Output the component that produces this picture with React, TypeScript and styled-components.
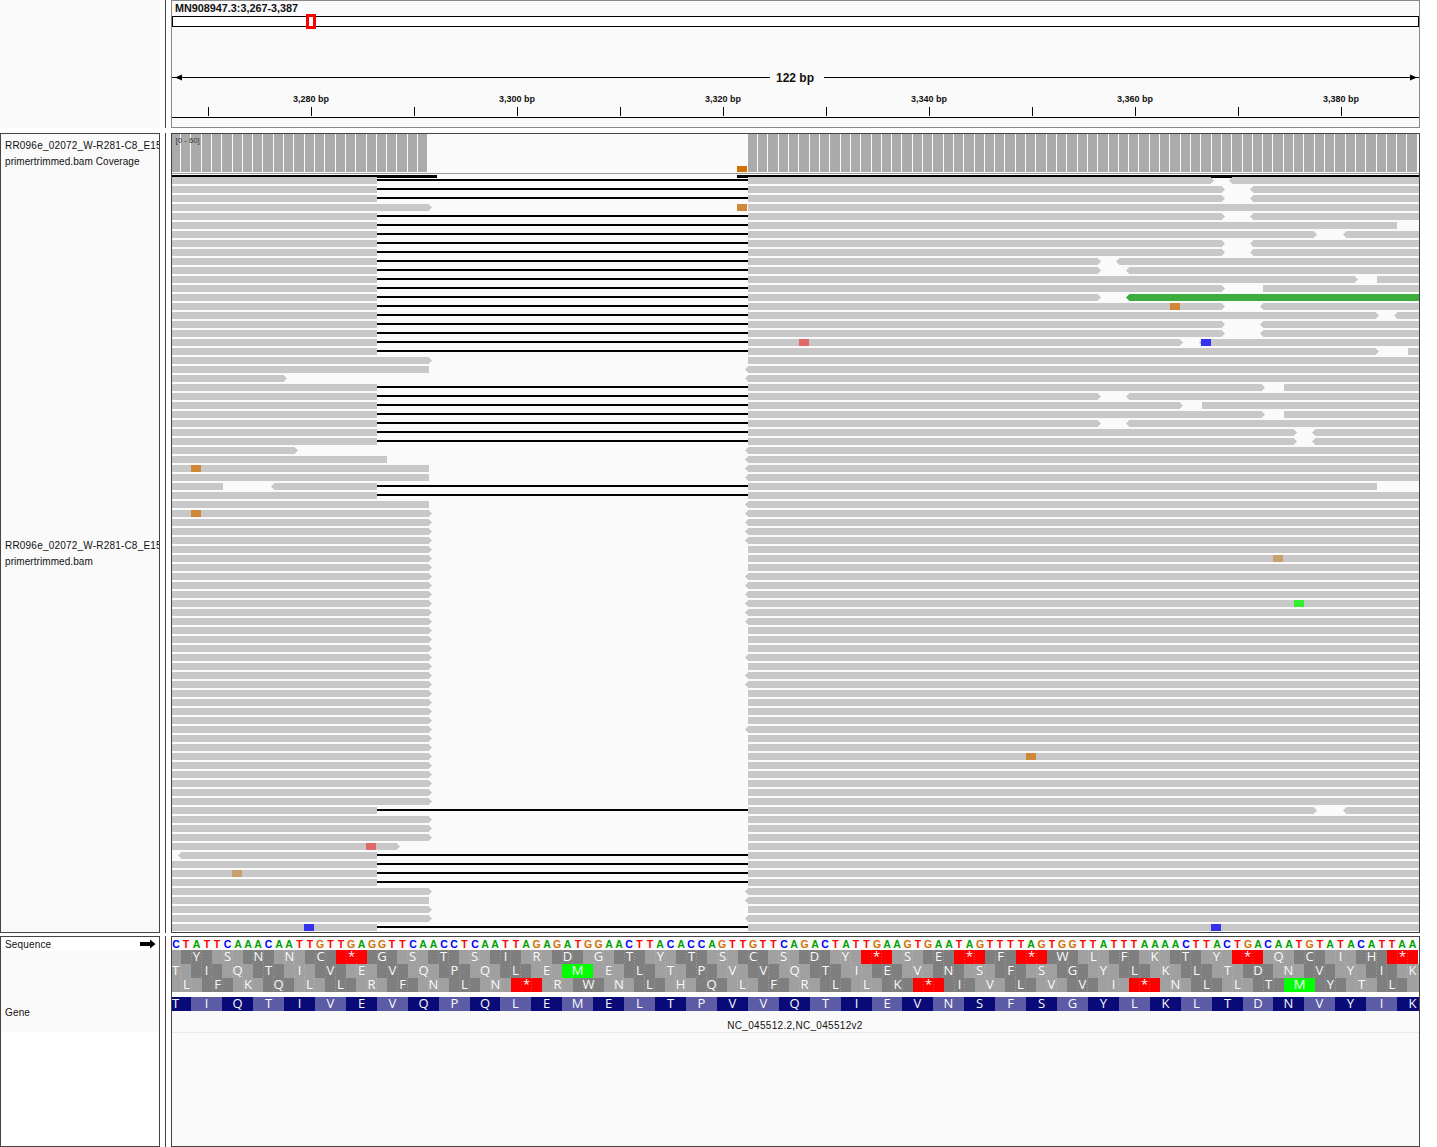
import styled, { createGlobalStyle } from "styled-components";

const GlobalStyle = createGlobalStyle`
  html, body {
    margin: 0;
    padding: 0;
    background: #fff;
  }
`;

const Page = styled.div`
  width: 1437px;
  height: 1147px;
  overflow: hidden;
  display: flex;
  flex-direction: column;
  font-family: "Liberation Sans", Arial, sans-serif;
  color: #111;
`;

const Band = styled.div<{ $h: number; $gap?: number }>`
  display: flex;
  height: ${(p) => p.$h}px;
  margin-bottom: ${(p) => p.$gap ?? 0}px;
  flex: none;
`;

const NamePanel = styled.div<{ $framed?: boolean }>`
  box-sizing: border-box;
  width: 160px;
  background: #fafafa;
  display: flex;
  flex-direction: column;
  ${(p) => p.$framed && `border: 1px solid #444;`}
`;

const Splitter = styled.div`
  width: 1px;
  margin: 0 5px;
  background: #444;
  flex: none;
`;

const DataPanel = styled.div<{ $soft?: boolean }>`
  box-sizing: border-box;
  width: 1249px;
  background: #fafafa;
  border: 1px solid ${(p) => (p.$soft ? "#888" : "#444")};
  overflow: hidden;
  display: flex;
  flex-direction: column;
  flex: none;
`;

const LocusTitle = styled.div`
  font-size: 10.8px;
  font-weight: bold;
  line-height: 15px;
  padding-left: 3px;
`;

const Ideogram = styled.div`
  box-sizing: border-box;
  position: relative;
  height: 11px;
  flex: none;
  background: #fff;
  border: 1px solid #000;
`;

const Viewport = styled.div`
  position: absolute;
  left: 133px;
  top: -3px;
  width: 10px;
  height: 15px;
  box-sizing: border-box;
  border: 3px solid #f00;
  background: #fff;
`;

const Chart = styled.svg`
  display: block;
  flex: none;
`;

const CoverageName = styled.div`
  height: 40px;
  padding: 4px 0 0 4px;
  flex: none;
`;

const AlignmentName = styled.div`
  flex: 1;
  display: flex;
  flex-direction: column;
  justify-content: center;
  padding: 0 0 2px 4px;
`;

const NameLine = styled.div<{ $wide?: boolean }>`
  font-size: 10px;
  line-height: 16px;
  letter-spacing: ${(p) => (p.$wide ? "0.2px" : "0.07px")};
  white-space: nowrap;
  overflow: hidden;
`;

const SequenceName = styled.div`
  display: flex;
  justify-content: space-between;
  align-items: center;
  height: 14px;
  padding: 0 3px 0 4px;
  font-size: 10px;
  letter-spacing: 0.15px;
`;

const GeneName = styled.div`
  height: 81px;
  padding: 48px 0 0 4px;
  box-sizing: border-box;
  font-size: 10px;
  letter-spacing: 0.15px;
  line-height: 27px;
  background: #fafafa;
`;

const FootPanel = styled(NamePanel)`
  background: #fff;
`;

const BaseRow = styled.div`
  display: flex;
  height: 13px;
  flex: none;
`;

const BaseLetter = styled.span<{ $base: string }>`
  flex: none;
  text-align: center;
  font-size: 10.5px;
  font-weight: bold;
  line-height: 14px;
  color: ${(p) =>
    ({ A: "#00a000", C: "#0000ff", G: "#d17105", T: "#ff0000" })[p.$base]};
`;

const CodonRow = styled.div`
  display: flex;
  height: 14px;
  flex: none;
`;

const TONES: Record<string, string> = {
  dark: "#7f7f7f",
  light: "#a0a0a0",
  stop: "#ff0000",
  start: "#00ff00",
  navy: "#0a0a78",
  dusk: "#5c5ca6",
};

const Codon = styled.span<{ $tone: string }>`
  flex: none;
  text-align: center;
  font-family: "Open Sans", sans-serif;
  font-size: 13px;
  line-height: 12px;
  color: #fafafa;
  background-color: ${(p) => TONES[p.$tone]};
  background-image: ${(p) =>
    p.$tone === "navy" || p.$tone === "dusk"
      ? "none"
      : `repeating-linear-gradient(to bottom, rgba(255,255,255,.22) 0 1px, transparent 1px 3px),
         repeating-linear-gradient(to bottom, rgba(255,255,255,.22) 0 1px, transparent 1px 3px)`};
  background-size: 1px 100%;
  background-repeat: no-repeat;
  background-position: 33% 0, 67% 0;
`;

const RowGap = styled.div`
  height: 5px;
  background: #fff;
  flex: none;
`;

const GeneCaption = styled.div`
  height: 21px;
  border-bottom: 1px solid #ebebeb;
  font-size: 10px;
  letter-spacing: 0.3px;
  line-height: 30px;
  text-align: center;
  flex: none;
  padding-right: 1px;
`;

// screen x of the k-th base of the window
const bx = (k: number) => Math.round(170.7 + 10.306 * k);

const SEQUENCE =
  "CTATTCAAACAATTGTTGAGGTTCAACCTCAATTAGAGATGGAACTTACACCAGTTGTTCAGACTATTGAAGTGAATAGTTTTAGTGGTTATTTAAAACTTACTGACAATGTATACATTAA";
const FRAME_A = " YSNNC*GSTSIRDGTYTSCSDY*SE*F*WLFKTY*QCIH*";
const FRAME_B = "TIQTIVEVQPQLEMELTPVVQTIEVNSFSGYLKLTDNVYIK";
const FRAME_C = "LFKQLLRFNLN*RWNLHQLFRLLK*IVLVVI*NLLTMYTL ";

function Frame({
  letters,
  startK,
  tone,
}: {
  letters: string;
  startK: number;
  tone: (letter: string, i: number) => string;
}) {
  return (
    <CodonRow>
      {letters.split("").map((letter, i) => {
        const k = startK + 3 * i;
        return (
          <Codon
            key={i}
            $tone={tone(letter, i)}
            style={{
              width: bx(k + 3) - bx(k),
              marginLeft: i === 0 ? bx(k) - 172 : 0,
            }}
          >
            {letter}
          </Codon>
        );
      })}
    </CodonRow>
  );
}

const frameTone = (letter: string, i: number) => {
  if (letter === "*") return "stop";
  if (letter === "M") return "start";
  return i % 2 === 0 ? "light" : "dark";
};

// ---- pileup data, in screen coordinates ----

const READ = "#c8c8c8";
const rowY = (i: number) => 177 + 9 * i;

const DELETIONS = [
  0, 1, 2, 4, 5, 6, 7, 8, 9, 10, 11, 12, 13, 14, 15, 16, 17, 18, 19, 23, 24, 25,
  26, 27, 28, 29, 34, 35, 70, 75, 76, 77, 78, 83,
];

// left read ends that are not the default arrow at 432: [tip or end, has arrow]
const LEFT_ENDS: Record<number, [number, boolean]> = {
  21: [429, false],
  22: [287, true],
  30: [298, true],
  31: [387, false],
  32: [429, false],
  33: [429, false],
  36: [429, false],
  74: [400, true],
  80: [429, false],
};

const ARROW_STARTS = [
  21, 22, 30, 31, 32, 33, 36, 37, 38, 39, 40, 44, 45, 46, 47, 48, 49, 53, 55, 56,
  61, 79, 80, 82,
];

// gaps in the right read: [end tip, next start, next start has arrow]
const GAPS: Record<number, [number, number, boolean]> = {
  0: [1214, 1229, true],
  1: [1225, 1250, true],
  2: [1225, 1250, true],
  4: [1225, 1250, true],
  6: [1317, 1343, true],
  7: [1225, 1250, true],
  8: [1225, 1250, true],
  9: [1101, 1116, true],
  10: [1101, 1126, true],
  11: [1358, 1377, false],
  12: [1225, 1263, false],
  13: [1101, 1126, true],
  14: [1225, 1260, true],
  15: [1379, 1394, true],
  16: [1225, 1260, true],
  17: [1225, 1260, true],
  18: [1183, 1199, true],
  19: [1379, 1408, false],
  23: [1265, 1284, false],
  24: [1101, 1126, true],
  25: [1183, 1202, false],
  26: [1265, 1284, false],
  27: [1101, 1126, true],
  28: [1297, 1312, true],
  29: [1297, 1312, true],
  70: [1317, 1343, true],
};

const MISMATCHES: [number, number, string][] = [
  [3, 737, "#d08838"],
  [14, 1170, "#d08838"],
  [18, 799, "#e06a6a"],
  [18, 1201, "#3333ee"],
  [32, 191, "#d08838"],
  [37, 191, "#d08838"],
  [42, 1273, "#c8a070"],
  [47, 1294, "#33ee33"],
  [64, 1026, "#d08838"],
  [74, 366, "#e06a6a"],
  [77, 232, "#c8a070"],
  [83, 304, "#3333ee"],
  [83, 1211, "#3333ee"],
];

// read as a path; tips stick out 3px past the body
function readPath(i: number, from: number, to: number, tipL: boolean, tipR: boolean) {
  const y = rowY(i);
  const left = tipL ? `M${from} ${y + 3.5}L${from + 3} ${y}` : `M${from} ${y}`;
  const right = tipR
    ? `H${to - 3}L${to} ${y + 3.5}L${to - 3} ${y + 7}`
    : `H${to}V${y + 7}`;
  const close = tipL ? `H${from + 3}Z` : `H${from}Z`;
  return left + right + close;
}

function Pileup() {
  const grey: string[] = [];
  let green = "";
  for (let i = 0; i < 84; i++) {
    if (i === 34) {
      grey.push(readPath(i, 172, 223, false, false));
      grey.push(readPath(i, 271, 377, true, false));
    } else if (i === 75) {
      grey.push(readPath(i, 178, 377, true, false));
    } else if (DELETIONS.includes(i)) {
      grey.push(readPath(i, 172, 377, false, false));
    } else {
      const [end, arrow] = LEFT_ENDS[i] ?? [432, true];
      grey.push(readPath(i, 172, end, false, arrow));
    }
    const arrowStart = ARROW_STARTS.includes(i);
    const from = arrowStart ? 745 : 748;
    const gap = GAPS[i];
    if (gap) {
      grey.push(readPath(i, from, gap[0], arrowStart, true));
      if (i === 13) green = readPath(i, gap[1], 1419, true, false);
      else grey.push(readPath(i, gap[1], 1419, gap[2], false));
    } else if (i === 5) {
      grey.push(readPath(i, from, 1397, arrowStart, false));
    } else if (i === 34) {
      grey.push(readPath(i, from, 1377, arrowStart, false));
    } else {
      grey.push(readPath(i, from, 1419, arrowStart, false));
    }
  }

  const bars: number[] = [];
  for (let k = 0; k < 121; k++) {
    if (k <= 24 || k >= 56) bars.push(k);
  }

  return (
    <Chart width={1247} height={798} viewBox="172 134 1247 798" shapeRendering="crispEdges">
      {bars.map((k) => {
        const a = Math.max(bx(k), 172);
        return <rect key={k} x={a} y={134} width={bx(k + 1) - 1 - a} height={38} fill="#ababab" />;
      })}
      <text
        x={175.5}
        y={142.5}
        fontSize={7.8}
        fill="#333"
        fontFamily="'Liberation Sans', sans-serif"
      >
        [0 - 60]
      </text>
      <rect x={737} y={166} width={10} height={6} fill="#d17105" />
      <rect x={172} y={173} width={1247} height={1} fill="#999" />
      <rect x={172} y={175} width={265} height={3} fill="#000" />
      <rect x={737} y={175} width={682} height={3} fill="#000" />
      {DELETIONS.map((i) => (
        <rect key={i} x={377} y={rowY(i) + 2} width={371} height={2} fill="#000" />
      ))}
      <path d={grey.join("")} fill={READ} />
      <path d={green} fill="#3dae3d" />
      {MISMATCHES.map(([i, x, fill]) => (
        <rect key={`${i}-${x}`} x={x} y={rowY(i)} width={10} height={7} fill={fill} />
      ))}
    </Chart>
  );
}

const TICKS = Array.from({ length: 12 }, (_, i) => 208 + 103 * i);
const LABELS: [number, string][] = [
  [311, "3,280 bp"],
  [517, "3,300 bp"],
  [723, "3,320 bp"],
  [929, "3,340 bp"],
  [1135, "3,360 bp"],
  [1341, "3,380 bp"],
];

function Ruler() {
  return (
    <Chart
      width={1247}
      height={100}
      viewBox="172 27 1247 100"
      fontFamily="'Liberation Sans', sans-serif"
      fontWeight="bold"
      fill="#111"
    >
      <g shapeRendering="crispEdges">
        <rect x={172} y={77} width={598} height={1} fill="#000" />
        <rect x={824} y={77} width={595} height={1} fill="#000" />
        {TICKS.map((x) => (
          <rect key={x} x={x} y={107} width={1} height={9} fill="#000" />
        ))}
        <rect x={172} y={117} width={1247} height={1} fill="#000" />
      </g>
      <path d="M175 77.5L182 74.5V80.5Z" fill="#000" />
      <path d="M1417 77.5L1410 74.5V80.5Z" fill="#000" />
      <text x={795} y={82} fontSize={12} textAnchor="middle">
        122 bp
      </text>
      {LABELS.map(([x, label]) => (
        <text key={x} x={x} y={102} fontSize={9} textAnchor="middle">
          {label}
        </text>
      ))}
    </Chart>
  );
}

function SequenceArrow() {
  return (
    <svg width={16} height={10} viewBox="0 0 16 10">
      <path d="M0 3H10V0.5L15.5 5L10 9.5V7H0Z" fill="#000" />
    </svg>
  );
}

export default function App() {
  return (
    <Page>
      <GlobalStyle />
      <Band $h={128} $gap={5}>
        <NamePanel />
        <Splitter />
        <DataPanel $soft>
          <LocusTitle>MN908947.3:3,267-3,387</LocusTitle>
          <Ideogram>
            <Viewport />
          </Ideogram>
          <Ruler />
        </DataPanel>
      </Band>

      <Band $h={800} $gap={3}>
        <NamePanel $framed>
          <CoverageName>
            <NameLine $wide>RR096e_02072_W-R281-C8_E15</NameLine>
            <NameLine>primertrimmed.bam Coverage</NameLine>
          </CoverageName>
          <AlignmentName>
            <NameLine $wide>RR096e_02072_W-R281-C8_E15</NameLine>
            <NameLine>primertrimmed.bam</NameLine>
          </AlignmentName>
        </NamePanel>
        <Splitter />
        <DataPanel>
          <Pileup />
        </DataPanel>
      </Band>

      <Band $h={211}>
        <FootPanel $framed>
          <SequenceName>
            Sequence
            <SequenceArrow />
          </SequenceName>
          <GeneName>Gene</GeneName>
        </FootPanel>
        <Splitter />
        <DataPanel>
          <BaseRow>
            {SEQUENCE.split("").map((base, k) => (
              <BaseLetter
                key={k}
                $base={base}
                style={{
                  width: bx(k + 1) - bx(k),
                  marginLeft: k === 0 ? bx(0) - 172 : 0,
                }}
              >
                {base}
              </BaseLetter>
            ))}
          </BaseRow>
          <Frame
            letters={FRAME_A}
            startK={-2}
            tone={(l, i) => (i === 0 ? "light" : frameTone(l, i))}
          />
          <Frame letters={FRAME_B} startK={-1} tone={frameTone} />
          <Frame letters={FRAME_C} startK={0} tone={frameTone} />
          <RowGap />
          <Frame
            letters={FRAME_B}
            startK={-1}
            tone={(_, i) => (i % 2 === 0 ? "navy" : "dusk")}
          />
          <GeneCaption>NC_045512.2,NC_045512v2</GeneCaption>
        </DataPanel>
      </Band>
    </Page>
  );
}
